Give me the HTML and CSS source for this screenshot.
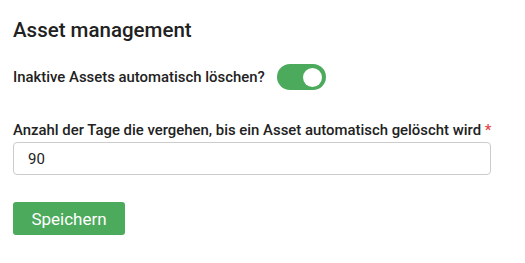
FILE: index.html
```html
<!DOCTYPE html>
<html lang="de">
<head>
<meta charset="utf-8">
<link rel="stylesheet" href="styles.css">
</head>
<body>
<div class="page">
  <h2 class="title">Asset management</h2>
  <div class="toggle-row">
    <span class="label">Inaktive Assets automatisch löschen?</span>
    <span class="switch"><span class="knob"></span></span>
  </div>
  <div class="field">
    <label class="label nowrap">Anzahl der Tage die vergehen, bis ein Asset automatisch gelöscht wird <span class="req">*</span></label>
    <div class="input">90</div>
  </div>
  <button class="btn">Speichern</button>
</div>
</body>
</html>
```
FILE: styles.css
```css
html, body {
  margin: 0;
  padding: 0;
  background: #ffffff;
}
.page {
  font-family: Roboto, "Liberation Sans", sans-serif;
  color: #222222;
  padding: 18px 13px 0 13px;
  width: 478px;
}
.title {
  margin: 0;
  font-size: 20.5px;
  line-height: 24px;
  font-weight: 500;
  color: #212121;
}
.toggle-row {
  display: flex;
  align-items: center;
  gap: 12px;
  margin-top: 22px;
  height: 26px;
}
.label {
  font-size: 14.9px;
  line-height: 20px;
  font-weight: 500;
  color: #222222;
}
.nowrap {
  white-space: nowrap;
}
.switch {
  display: flex;
  align-items: center;
  justify-content: flex-end;
  box-sizing: border-box;
  width: 49px;
  height: 26px;
  border-radius: 13px;
  background: #4caa5c;
  padding: 0 4px;
}
.knob {
  width: 19px;
  height: 19px;
  border-radius: 50%;
  background: #ffffff;
}
.field {
  margin-top: 30px;
  display: flex;
  flex-direction: column;
  gap: 2px;
}
.req {
  color: #e04848;
}
.input {
  box-sizing: border-box;
  height: 33px;
  border: 1px solid #cccccc;
  border-radius: 4px;
  padding: 0 14px;
  display: flex;
  align-items: center;
  font-size: 15px;
  color: #222222;
}
.btn {
  margin-top: 27px;
  box-sizing: border-box;
  width: 112px;
  height: 33px;
  border: none;
  border-radius: 3px;
  background: #4caa5c;
  color: #ffffff;
  font-family: Roboto, "Liberation Sans", sans-serif;
  font-size: 17px;
  font-weight: 400;
  padding: 0;
}
```
